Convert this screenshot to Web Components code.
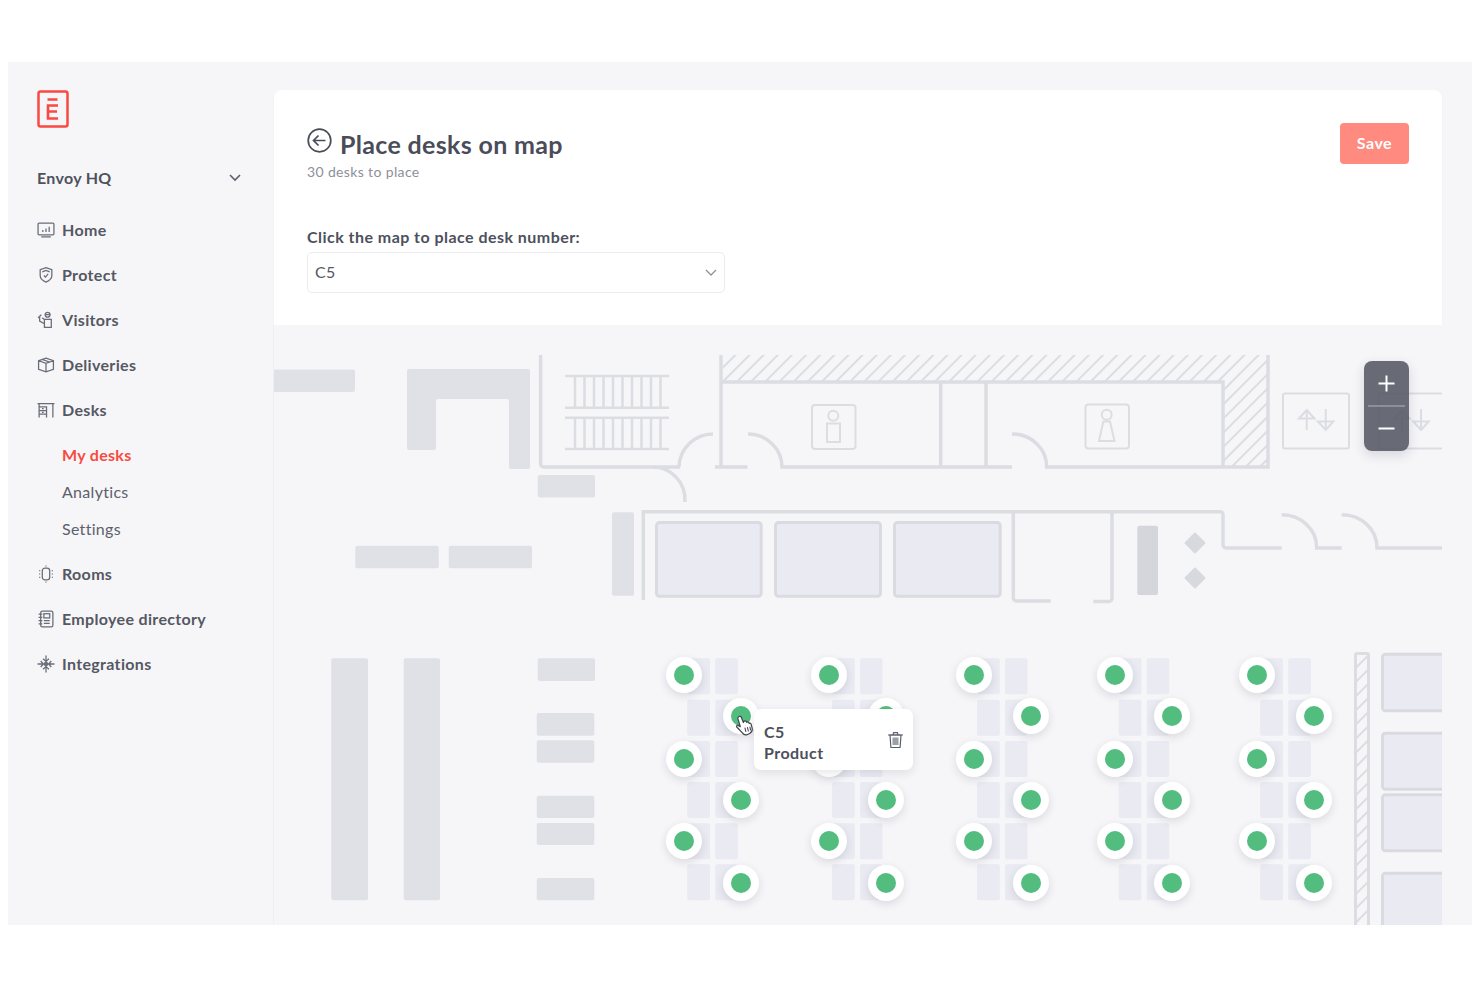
<!DOCTYPE html>
<html lang="en">
<head>
<meta charset="utf-8">
<title>Place desks on map</title>
<style>
  html, body { margin: 0; background: #fff; }
  body { padding: 62px 8px 0 8px; font-family: Lato, "Noto Sans", sans-serif; color: #4a4d59; }
</style>
</head>
<body>
<app-shell>
  <side-nav slot="nav">
    <nav-item icon="home">Home</nav-item>
    <nav-item icon="protect">Protect</nav-item>
    <nav-item icon="visitors">Visitors</nav-item>
    <nav-item icon="deliveries">Deliveries</nav-item>
    <nav-item icon="desks">Desks</nav-item>
    <sub-nav>
      <sub-item active>My desks</sub-item>
      <sub-item>Analytics</sub-item>
      <sub-item>Settings</sub-item>
    </sub-nav>
    <nav-item icon="rooms">Rooms</nav-item>
    <nav-item icon="directory">Employee directory</nav-item>
    <nav-item icon="integrations">Integrations</nav-item>
  </side-nav>
  <place-panel slot="main" heading="Place desks on map" sub="30 desks to place" label="Click the map to place desk number:" value="C5"></place-panel>
  <floor-map slot="main"></floor-map>
</app-shell>

<script>
const ICONS = {
  home: '<rect x="1" y="2" width="15" height="11" rx="1"/><path d="M4 15h9M5.500 10.500V8.500M8.500 10.500V7M11.500 10.500V5.500"/>',
  protect: '<path d="M8.500 1.500l5.500 2v5.500c0 3-2.500 5-5.500 6.200C5.500 14 3 12 3 9V3.500z"/><path d="M5 5.500l3.500-1.300 3.500 1.300M6.500 9l1.500 1.500 2.500-3"/>',
  visitors: '<circle cx="10" cy="3.500" r="2.300"/><path d="M7.500 3.500h5M7 8h6.500v7.500H7zM7 12L2.500 9.500V5M2.500 5L4 3.500M2.500 7L1 5.500M7 8L5 6.500"/>',
  deliveries: '<path d="M8.500 2L15.500 4.500v8L8.500 15 1.500 12.500v-8zM1.500 4.500L8.500 7l7-2.500M8.500 7v8M5 3.300l7 2.500"/>',
  desks: '<path d="M.5 2.500h16M2 2.500v13M15 2.500v13M2 5.500h7v10M2 9h7M2 12.500h7M4.700 7.200h1.600M4.700 10.700h1.600"/>',
  rooms: '<rect x="5" y="3" width="7" height="11" rx="2.500"/><path d="M8.500.5v1M8.500 15.500v1M2.500 5v1M2.500 8v1M2.500 11v1M14.500 5v1M14.500 8v1M14.500 11v1"/>',
  directory: '<rect x="3.500" y="1" width="11.500" height="15" rx="1.500"/><path d="M1.500 4h3.500M1.500 7h3.500M1.500 10h3.500M1.500 13h3.500"/><rect x="6.500" y="3.500" width="5.500" height="4"/><path d="M6.500 10h5.500M6.500 12.700h5.500"/>',
  integrations: '<path d="M8.500 .5v16M.5 8.500h16M5.700 3.500l2.800 2.500 2.800-2.500M5.700 13.500l2.800-2.500 2.800 2.500M3.500 5.700L6 8.500l-2.500 2.800M13.500 5.700L11 8.500l2.500 2.800"/><circle cx="8.500" cy="8.500" r="1.500"/>'
};

class AppShell extends HTMLElement {
  constructor() {
    super();
    this.attachShadow({ mode: 'open' });
    this.shadowRoot.innerHTML = `
      <style>
        :host {
          display: grid;
          grid-template-columns: 266px 1168px 30px;
          height: 863px;
          background: #f6f6f8;
          overflow: hidden;
        }
        main { padding-top: 28px; display: flex; flex-direction: column; min-width: 0; }
      </style>
      <slot name="nav"></slot>
      <main><slot name="main"></slot></main>
      <div></div>
    `;
  }
}

class SideNav extends HTMLElement {
  constructor() {
    super();
    this.attachShadow({ mode: 'open' });
    this.shadowRoot.innerHTML = `
      <style>
        :host { display: block; padding: 28px 30px 0 29px; box-sizing: border-box; }
        .logo { display: block; width: 32px; height: 38px; }
        .loc {
          display: flex; align-items: center; justify-content: space-between;
          height: 30px; margin: 34px 0 15px 0;
          font-size: 16px; font-weight: 700; color: #4f525d; letter-spacing: .3px;
        }
        svg.chev { width: 14px; height: 9px; margin-right: 2px; }
      </style>
      <svg class="logo" viewBox="0 0 32 38" fill="none" stroke="#f84a42">
        <rect x="1.500" y="1.500" width="29" height="35" rx="2" stroke-width="2.500"/>
        <path d="M10.500 9.500h10" stroke-width="2.500"/>
        <path d="M21 15.500H11v13h10M11 21.500h9" stroke-width="2.600"/>
      </svg>
      <div class="loc"><span>Envoy HQ</span>
        <svg class="chev" viewBox="0 0 14 9" fill="none" stroke="#5d606b" stroke-width="1.600"><path d="M2 2l5 5 5-5"/></svg>
      </div>
      <slot></slot>
    `;
  }
}

class NavItem extends HTMLElement {
  constructor() {
    super();
    this.attachShadow({ mode: 'open' });
  }
  connectedCallback() {
    const icon = ICONS[this.getAttribute('icon')] || '';
    this.shadowRoot.innerHTML = `
      <style>
        :host {
          display: flex; align-items: center; gap: 7px; height: 45px;
          font-size: 16px; font-weight: 700; color: #555863; letter-spacing: .33px;
        }
        svg { width: 18px; height: 18px; flex: none; }
      </style>
      <svg viewBox="0 0 17 17" fill="none" stroke="#6a6d78" stroke-width="1.200">${icon}</svg>
      <span><slot></slot></span>
    `;
  }
}

class SubNav extends HTMLElement {
  constructor() {
    super();
    this.attachShadow({ mode: 'open' });
    this.shadowRoot.innerHTML = `
      <style>:host { display: block; margin: 4px 0; padding-left: 25px; }</style>
      <slot></slot>
    `;
  }
}

class SubItem extends HTMLElement {
  constructor() {
    super();
    this.attachShadow({ mode: 'open' });
    this.shadowRoot.innerHTML = `
      <style>
        :host {
          display: flex; align-items: center; height: 37px;
          font-size: 16px; font-weight: 400; color: #5d606b; letter-spacing: .3px;
        }
        :host([active]) { color: #f84a42; font-weight: 700; }
      </style>
      <slot></slot>
    `;
  }
}

class PlacePanel extends HTMLElement {
  constructor() {
    super();
    this.attachShadow({ mode: 'open' });
  }
  connectedCallback() {
    const a = n => this.getAttribute(n) || '';
    this.shadowRoot.innerHTML = `
      <style>
        :host {
          display: flex; justify-content: space-between; align-items: flex-start;
          flex: none; height: 235px; box-sizing: border-box;
          padding: 33px 33px 0 33px; background: #fff;
          border-radius: 8px 8px 0 0;
          box-shadow: 0 1px 2px rgba(60,60,90,.06);
        }
        .title { display: flex; align-items: center; gap: 8px; height: 38px; margin-top: 2px; }
        .title svg { width: 25px; height: 25px; margin-top: -8px; flex: none; }
        h1 { margin: 0; font-size: 25px; font-weight: 700; color: #4a4d59; letter-spacing: .33px; }
        .sub { font-size: 14px; color: #8d8f9b; margin-top: -1px; line-height: 20px; letter-spacing: .36px; }
        label { display: block; margin-top: 44px; font-size: 16px; font-weight: 700; color: #4d505c; line-height: 22px; letter-spacing: .46px; }
        .select {
          display: flex; align-items: center; justify-content: space-between;
          width: 418px; height: 41px; box-sizing: border-box; margin-top: 4px;
          padding: 0 6px 0 7px; border: 1px solid #ebebf1; border-radius: 5px;
          font-size: 16px; color: #55585f; letter-spacing: .3px;
        }
        .select span { margin-top: -2px; }
        .select svg { width: 14px; height: 9px; }
        button {
          width: 69px; height: 41px; border: 0; border-radius: 4px; background: #ff8a80;
          color: #fff; font: 700 16px Lato, sans-serif; letter-spacing: .5px; padding: 0 0 2px;
        }
      </style>
      <div>
        <div class="title">
          <svg viewBox="0 0 25 25" fill="none" stroke="#4a4d59" stroke-width="1.700">
            <circle cx="12.500" cy="12.500" r="11.300"/><path d="M18.500 12.500H7M11.500 7.500l-5 5 5 5"/>
          </svg>
          <h1>${a('heading')}</h1>
        </div>
        <div class="sub">${a('sub')}</div>
        <label>${a('label')}</label>
        <div class="select"><span>${a('value')}</span>
          <svg viewBox="0 0 14 9" fill="none" stroke="#8d8f9b" stroke-width="1.300"><path d="M2 2l5 5 5-5"/></svg>
        </div>
      </div>
      <button>Save</button>
    `;
  }
}

class DeskPin extends HTMLElement {
  constructor() {
    super();
    this.attachShadow({ mode: 'open' });
    this.shadowRoot.innerHTML = `
      <style>
        :host {
          position: absolute; width: 36px; height: 36px; border-radius: 50%;
          margin: -18px 0 0 -18px; background: #fff;
          box-shadow: 0 3px 8px rgba(50,50,70,.14);
          display: flex; align-items: center; justify-content: center;
        }
        i { width: 20px; height: 20px; border-radius: 50%; background: #52bd7e; }
      </style>
      <i></i>
    `;
  }
  connectedCallback() {
    this.style.left = this.getAttribute('x') + 'px';
    this.style.top = this.getAttribute('y') + 'px';
  }
}

class DeskPopover extends HTMLElement {
  constructor() {
    super();
    this.attachShadow({ mode: 'open' });
    this.shadowRoot.innerHTML = `
      <style>
        :host {
          position: absolute; left: 480px; top: 384px; width: 159px; height: 61px;
          box-sizing: border-box; padding: 13px 9px 0 10px;
          background: #fff; border-radius: 7px;
          box-shadow: 0 3px 10px rgba(50,50,70,.12);
          display: flex; justify-content: space-between;
          font-size: 16px; font-weight: 700; line-height: 20.500px; color: #4d505c; letter-spacing: .45px;
        }
        svg { width: 17px; height: 18px; margin: 9px 0 0 0; }
      </style>
      <div><slot></slot></div>
      <svg viewBox="0 0 17 18" fill="none" stroke="#5d606b" stroke-width="1.200">
        <path d="M1 4h15M6 4l.6-2.300h3.800l.6 2.300"/>
        <path d="M3 4l.9 12.500h9.200L14 4z"/>
        <rect x="5.500" y="6.500" width="6" height="7.500" fill="#9c9ea8" stroke="none"/>
      </svg>
    `;
  }
}

class ZoomControl extends HTMLElement {
  constructor() {
    super();
    this.attachShadow({ mode: 'open' });
    this.shadowRoot.innerHTML = `
      <style>
        :host {
          position: absolute; left: 1090px; top: 36px; width: 45px; height: 90px;
          border-radius: 8px; background: rgba(84,88,99,.88);
          box-shadow: 0 4px 12px rgba(50,50,70,.16);
        }
        svg { display: block; width: 45px; height: 90px; }
      </style>
      <svg viewBox="0 0 45 90" fill="none" stroke="#fff" stroke-width="2">
        <path d="M22.500 14.500v16M14.500 22.500h16M14.500 67.500h16"/>
        <path d="M4 45h37" stroke="#9a9da6" stroke-width="1.500"/>
      </svg>
    `;
  }
}

class FloorMap extends HTMLElement {
  constructor() {
    super();
    this.attachShadow({ mode: 'open' });
  }
  connectedCallback() {
    // plan drawn in page coordinates
    const block = (x1, y1, x2, y2, fill = '#e0e1e6') =>
      `<rect x="${x1}" y="${y1}" width="${x2 - x1}" height="${y2 - y1}" rx="2" fill="${fill}"/>`;
    const room = (x1, y1, x2, y2) =>
      `<rect x="${x1}" y="${y1}" width="${x2 - x1}" height="${y2 - y1}" rx="3" fill="#e9eaf2" stroke="#dadbe1" stroke-width="3"/>`;

    const stairs = [575, 584.5, 594, 603.5, 613, 622.5, 632, 641.5, 651, 660.5]
      .map(x => `M${x} 376V408M${x} 418V449`).join('');

    const groups = [687.3, 832, 977, 1118.7, 1260.3];
    const rows = [658.3, 699.7, 741, 782, 823.3, 864.3];
    const desks = groups.map(g => rows.map(y =>
      block(g, y, g + 22.7, y + 36, '#e9eaf2') + block(g + 28, y, g + 50.5, y + 36, '#e9eaf2')
    ).join('')).join('');

    const pinLeft = [684, 829, 974, 1115, 1257];
    const pinRight = [741, 886, 1031, 1172, 1314];
    const pinRows = [675, 716, 759, 800, 841, 883];
    let pins = '';
    pinLeft.forEach((x, i) => pinRows.forEach((y, r) => {
      const px = r % 2 ? pinRight[i] : x;
      pins += `<desk-pin x="${px - 274}" y="${y - 325}"></desk-pin>`;
    }));

    this.shadowRoot.innerHTML = `
      <style>
        :host {
          display: block; position: relative; flex: none; height: 600px;
          background: #f6f6f9; overflow: hidden;
          border-left: 1px solid #eeeff3; margin-left: -1px;
        }
        svg.plan { display: block; width: 1168px; height: 600px; }
        .cursor { position: absolute; left: 460px; top: 389px; width: 20px; height: 22px; }
      </style>
      <svg class="plan" viewBox="274 325 1168 600" fill="none">
        <defs>
          <pattern id="hatch" width="10" height="10" patternUnits="userSpaceOnUse" patternTransform="rotate(45)">
            <line x1="0" y1="0" x2="0" y2="10" stroke="#dcdde3" stroke-width="4"/>
          </pattern>
        </defs>

        ${block(270, 369.500, 355, 392)}
        <path d="M407 371a2 2 0 0 1 2-2H528a2 2 0 0 1 2 2V467a2 2 0 0 1-2 2H511a2 2 0 0 1-2-2V401a2 2 0 0 0-2-2H438a2 2 0 0 0-2 2V448a2 2 0 0 1-2 2H409a2 2 0 0 1-2-2z" fill="#e0e1e6"/>
        ${block(537.700, 475, 595, 497.500)}
        ${block(355.300, 545.700, 438.700, 568.300)}
        ${block(448.700, 545.700, 532, 568.300)}
        ${block(612, 512.300, 634, 595.700)}
        ${block(331.300, 658.300, 368, 900.300)}
        ${block(403.700, 658.300, 440, 900.300)}
        ${block(537.700, 658.300, 595, 681)}
        ${block(536.700, 713, 594.300, 735.700)}
        ${block(536.700, 740.300, 594.300, 762.700)}
        ${block(536.700, 795.700, 594.300, 818)}
        ${block(536.700, 823, 594.300, 845)}
        ${block(536.700, 878, 594.300, 900.300)}
        ${block(1137.300, 525.700, 1158, 595, '#d5d6dc')}

        <g stroke="#dcdde3" stroke-width="2.500">
          <path d="M565 376H669M565 407.700H669M565 417.700H669M565 449H669"/>
          <path d="${stairs}"/>
        </g>

        <rect x="723" y="355" width="545" height="27" fill="url(#hatch)"/>
        <rect x="1223" y="382" width="45" height="85" fill="url(#hatch)"/>

        <g stroke="#dcdde3" stroke-width="3.500">
          <path d="M540.600 355V464a3 3 0 0 0 3 3H680"/>
          <path d="M679 467A34 34 0 0 1 713 434"/>
          <path d="M653 467A32 33 0 0 1 685 502"/>
          <path d="M721 355V467M715 467H747.500"/>
          <path d="M748 434A34 33 0 0 1 782 467H1012"/>
          <path d="M1012 434A34 33 0 0 1 1046.700 467H1268V355"/>
          <path d="M721 382H1223V467"/>
          <path d="M940.700 382V467M986 382V467"/>
          <path d="M643.300 600V511.700H1220a3 3 0 0 1 3 3V545a3 3 0 0 0 3 3H1281.700"/>
          <path d="M1013.300 511.700V598a3 3 0 0 0 3 3H1050.700"/>
          <path d="M1093.300 601.500H1109a3 3 0 0 0 3-3V511.700"/>
          <path d="M1281.700 514.700A35 33 0 0 1 1316.700 548H1341.700"/>
          <path d="M1341.700 514.700A35 33 0 0 1 1377 548H1445"/>
        </g>

        ${room(656.500, 522.500, 761.200, 596.200)}
        ${room(775.500, 522.500, 880.500, 596.200)}
        ${room(894.500, 522.500, 1000.200, 596.200)}

        <g fill="#d8d9df" stroke="#d8d9df" stroke-width="2" stroke-linejoin="round">
          <path d="M1195 533.500l9.500 9.500-9.500 9.500-9.500-9.500z"/>
          <path d="M1195 568.500l9.500 9.500-9.500 9.500-9.500-9.500z"/>
        </g>

        <g stroke="#dcdde3" stroke-width="2">
          <rect x="812" y="405" width="43.500" height="44" rx="3"/>
          <circle cx="833.300" cy="415.700" r="5"/>
          <rect x="827" y="423.500" width="13" height="18.500"/>
          <rect x="1085.500" y="404.500" width="43.500" height="44" rx="3"/>
          <circle cx="1106.700" cy="414.700" r="5"/>
          <path d="M1103.300 421.500H1110L1114.500 441H1099z"/>
          <rect x="1283" y="393.500" width="66" height="55" rx="2"/>
          <path d="M1306.700 430V411M1299 418.500l7.700-8.500 7.700 8.500zM1325.700 409V428M1318 421.500l7.700 8.500 7.700-8.500z"/>
          <rect x="1378.500" y="393.500" width="90" height="55" rx="2"/>
          <path d="M1402 430V411M1394.300 418.500l7.700-8.500 7.700 8.500zM1421 409V428M1413.300 421.500l7.700 8.500 7.700-8.500z"/>
        </g>

        ${desks}

        <rect x="1355.500" y="653.500" width="13" height="290" rx="1.500" fill="url(#hatch)" stroke="#dcdde3" stroke-width="3"/>
        ${room(1382.500, 654.200, 1460, 710.800)}
        ${room(1382.500, 733.200, 1460, 789.200)}
        ${room(1382.500, 794.800, 1460, 850.800)}
        ${room(1382.500, 873.200, 1460, 960)}
      </svg>
      ${pins}
      <desk-popover>C5<br>Product</desk-popover>
      <svg class="cursor" viewBox="0 0 20 22">
        <path d="M5 2.500c1.100-.6 2 0 2.400 1l2 5 .4-.9c.5-1 2-1 2.500 0l.3.7c.6-.7 1.900-.5 2.300.4l.3.7c.7-.4 1.600-.1 1.900.7l1 3.800c.4 2-.4 4.500-2.500 5.600l-2.200 1c-1.900.9-3.700.2-4.800-1.300L2.800 13c-.6-.9.400-2.200 1.500-1.600l2 1.300L3.900 4.700c-.2-.9.300-1.800 1.100-2.200z" fill="#fff" stroke="#3f424c" stroke-width="1.200" stroke-linejoin="round"/>
        <path d="M11 14l.8 3.500M13.500 13.500l.8 3.500M16 13l.5 3" stroke="#3f424c" stroke-width="1.100" stroke-linecap="round"/>
      </svg>
      <zoom-control></zoom-control>
    `;
  }
}

customElements.define('app-shell', AppShell);
customElements.define('side-nav', SideNav);
customElements.define('nav-item', NavItem);
customElements.define('sub-nav', SubNav);
customElements.define('sub-item', SubItem);
customElements.define('place-panel', PlacePanel);
customElements.define('desk-pin', DeskPin);
customElements.define('desk-popover', DeskPopover);
customElements.define('zoom-control', ZoomControl);
customElements.define('floor-map', FloorMap);
</script>
</body>
</html>
